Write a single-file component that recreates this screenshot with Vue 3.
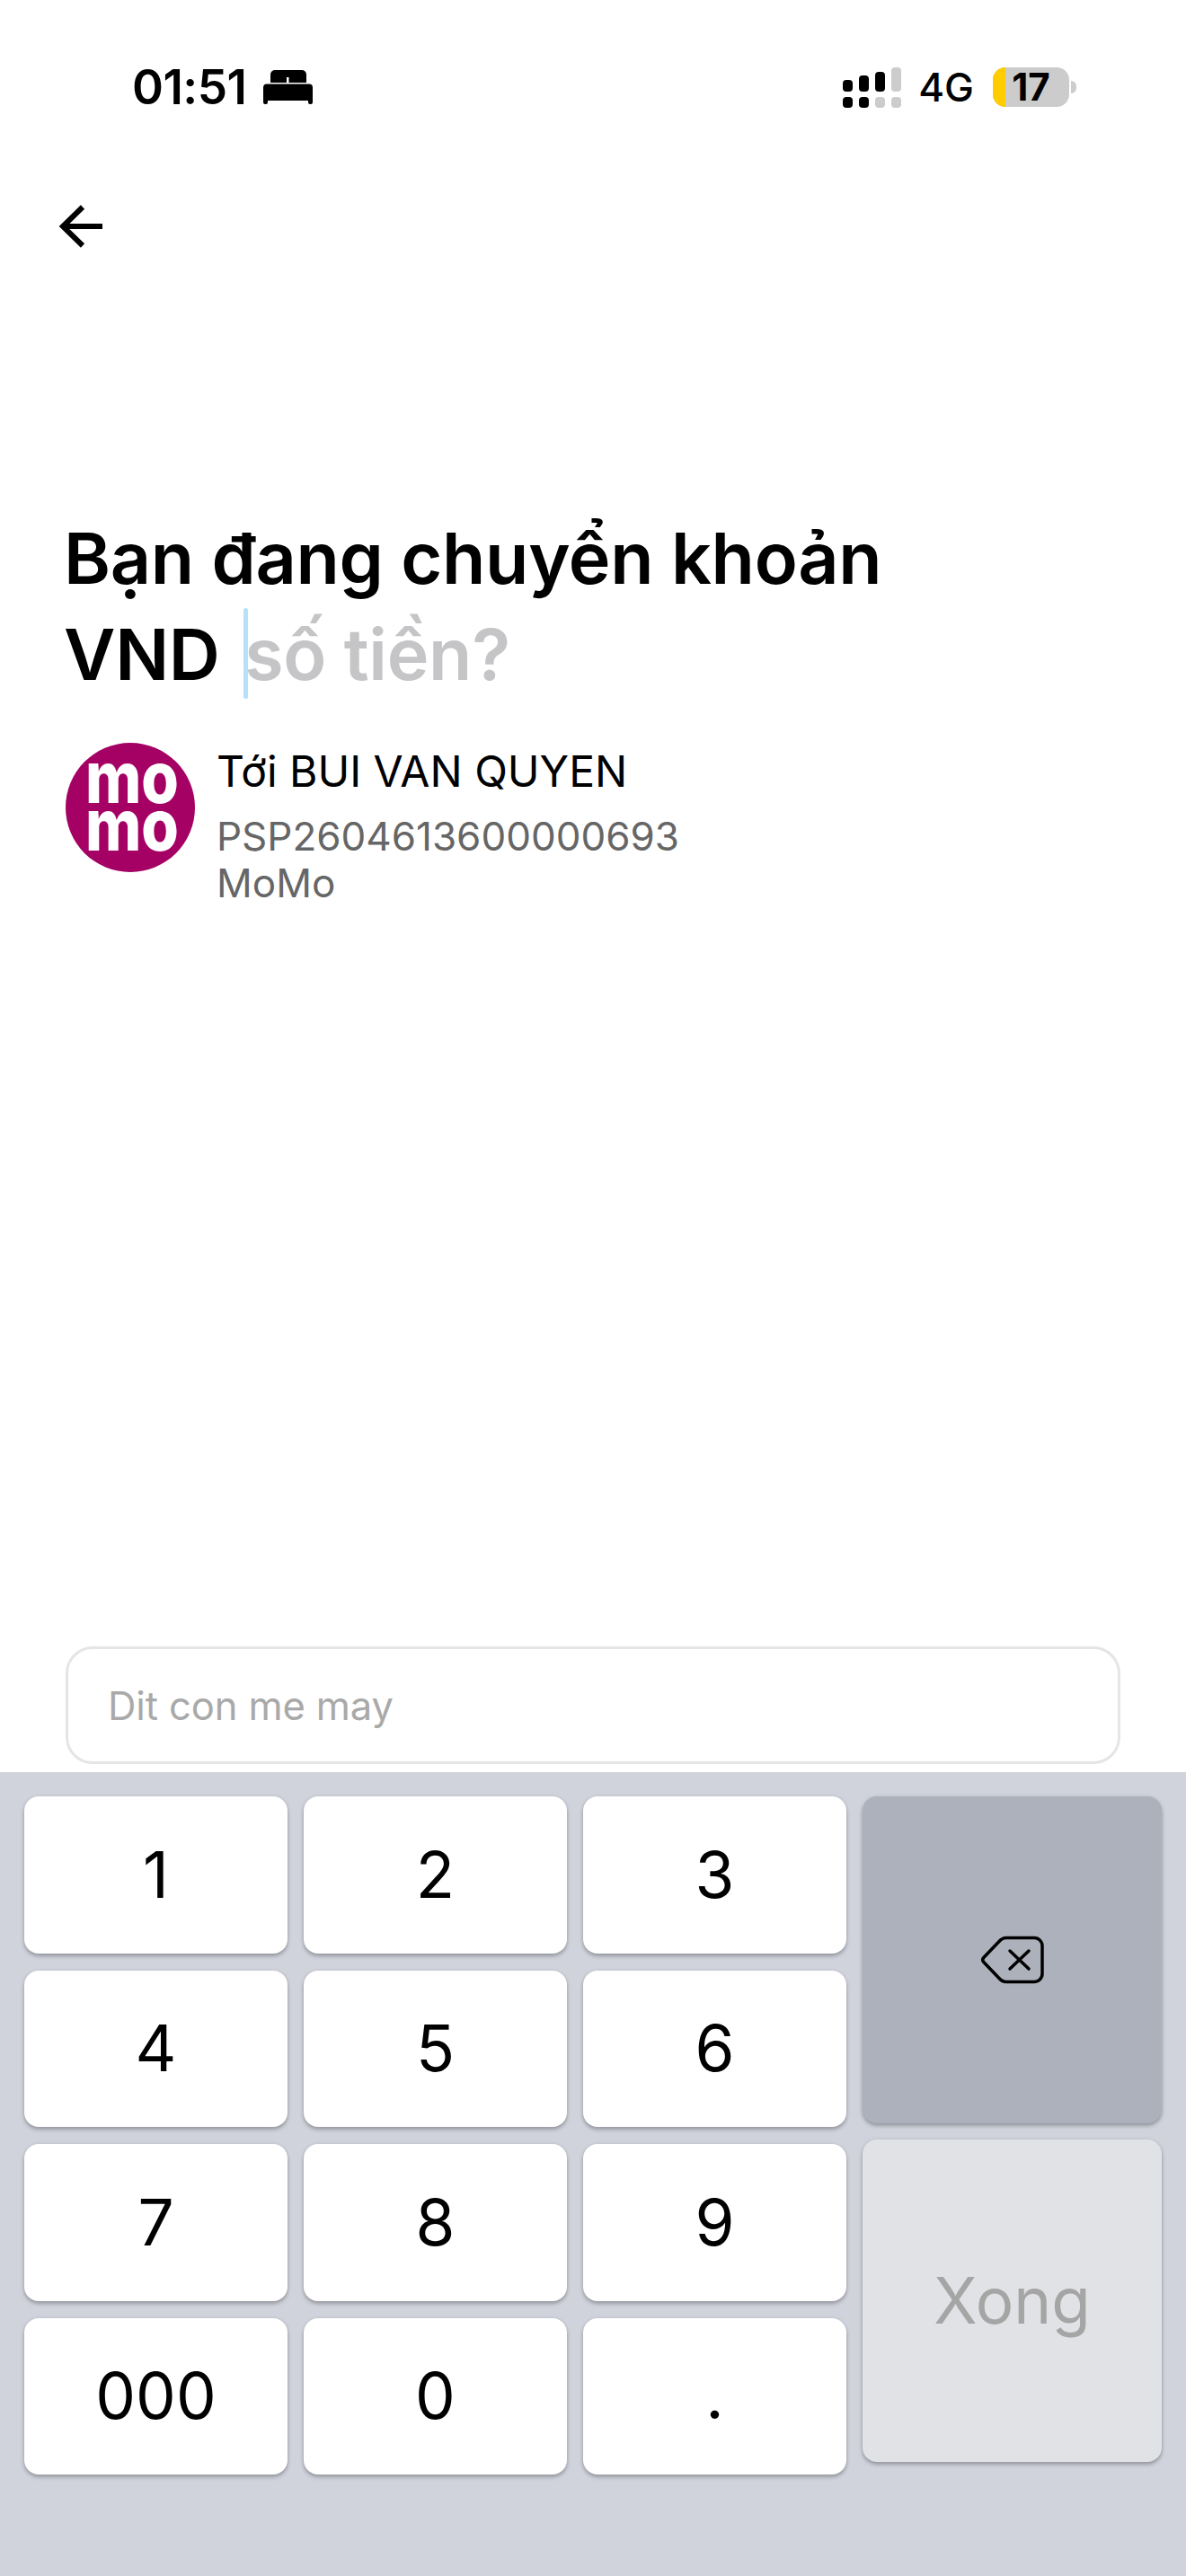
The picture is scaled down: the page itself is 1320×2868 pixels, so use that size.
<template>
  <div class="screen">
    <header class="status">
      <div class="status__left">
        <span class="status__time">01:51</span>
        <svg class="status__bed" width="55" height="38" viewBox="0 0 55 38">
          <rect x="8" y="0" width="40" height="14" rx="5" fill="#000" />
          <rect x="8" y="8" width="40" height="6" fill="#000" />
          <rect x="26" y="8" width="2.5" height="7" fill="#fff" />
          <path d="M4 15.500h47a4 4 0 0 1 4 4V36a2 2 0 0 1-2 2h-1a2 2 0 0 1-2-2v-2H5v2a2 2 0 0 1-2 2H2a2 2 0 0 1-2-2V19.500a4 4 0 0 1 4-4z" fill="#000" />
        </svg>
      </div>
      <div class="status__right">
        <div class="signal">
          <div v-for="(bar, i) in signalBars" :key="i" class="signal__col">
            <span class="signal__top" :class="{ 'signal__off': !bar.topOn }" :style="{ height: bar.height + 'px' }"></span>
            <span class="signal__dot" :class="{ 'signal__off': !bar.dotOn }"></span>
          </div>
        </div>
        <span class="status__net">4G</span>
        <div class="battery">
          <div class="battery__body">
            <span class="battery__level"></span>
            <span class="battery__text">17</span>
          </div>
          <span class="battery__cap"></span>
        </div>
      </div>
    </header>

    <nav class="nav">
      <svg width="52" height="52" viewBox="0 0 52 52" fill="none" stroke="#000" stroke-width="6">
        <path d="M50 26H5" />
        <path d="M28 4.500 6 26l22 21.500" />
      </svg>
    </nav>

    <main class="main">
      <h1 class="title">
        Bạn đang chuyển khoản<br />
        VND <span class="title__amount"><i class="title__caret"></i>số tiền?</span>
      </h1>

      <div class="recipient">
        <svg class="recipient__logo" width="144" height="144" viewBox="0 0 144 144">
          <circle cx="72" cy="72" r="72" fill="#a50064" />
          <text x="22" y="67" class="recipient__logo-text" textLength="104" lengthAdjust="spacingAndGlyphs">mo</text>
          <text x="22" y="120" class="recipient__logo-text" textLength="104" lengthAdjust="spacingAndGlyphs">mo</text>
        </svg>
        <div class="recipient__info">
          <p class="recipient__name">Tới BUI VAN QUYEN</p>
          <p class="recipient__meta">PSP2604613600000693</p>
          <p class="recipient__meta">MoMo</p>
        </div>
      </div>
    </main>

    <div class="note">Dit con me may</div>

    <section class="keyboard">
      <div class="keyboard__digits">
        <div v-for="key in digits" :key="key" class="key">{{ key }}</div>
      </div>
      <div class="keyboard__actions">
        <div class="key key--delete">
          <svg width="72" height="54" viewBox="0 0 72 54" fill="none" stroke="#000" stroke-width="3.500" stroke-linejoin="round">
            <path d="M3.800 24.500 21 6.500Q24.500 2.500 29 2.500H60a9 9 0 0 1 9 9v31a9 9 0 0 1-9 9H29Q24.500 51.500 21 47.500L3.800 29.500Q1.600 27 3.800 24.500z" />
            <path d="M33 17 54 37M54 17 33 37" stroke-linecap="round" />
          </svg>
        </div>
        <div class="key key--done">Xong</div>
      </div>
    </section>
  </div>
</template>

<script setup>
const digits = ["1", "2", "3", "4", "5", "6", "7", "8", "9", "000", "0", "."];

const signalBars = [
  { height: 13, topOn: true, dotOn: true },
  { height: 18, topOn: true, dotOn: true },
  { height: 22, topOn: true, dotOn: false },
  { height: 27, topOn: false, dotOn: false },
];
</script>

<style scoped>
.screen {
  display: flex;
  flex-direction: column;
  height: 2868px;
  background: #fff;
  color: #000;
  font-family: Inter, "Noto Sans", sans-serif;
  overflow: hidden;
}

.status {
  display: flex;
  justify-content: space-between;
  align-items: center;
  height: 194px;
  padding: 0 122px 0 147px;
}

.status__left {
  display: flex;
  align-items: center;
  gap: 18px;
}

.status__time {
  font-size: 53px;
  font-weight: 600;
  line-height: 1;
  letter-spacing: -0.5px;
}

.status__bed {
  display: block;
}

.status__right {
  display: flex;
  align-items: center;
}

.signal {
  display: flex;
  gap: 7px;
  margin-right: 19px;
}

.signal__col {
  display: flex;
  flex-direction: column;
  justify-content: flex-end;
  gap: 6px;
  height: 45px;
}

.signal__top,
.signal__dot {
  display: block;
  width: 11px;
  background: #000;
  border-radius: 4px;
}

.signal__dot {
  height: 12px;
}

.signal__off {
  background: #ccc;
}

.status__net {
  font-size: 44px;
  font-weight: 500;
  line-height: 1;
  margin-right: 21px;
}

.battery {
  display: flex;
  align-items: center;
  gap: 2px;
}

.battery__body {
  display: flex;
  align-items: center;
  justify-content: center;
  width: 85px;
  height: 44px;
  border-radius: 14px;
  background: #ccc;
  position: relative;
}

.battery__level {
  position: absolute;
  left: 0;
  top: 0;
  bottom: 0;
  width: 14px;
  border-radius: 14px 0 0 14px;
  background: #ffcc00;
}

.battery__text {
  font-size: 42px;
  font-weight: 700;
  line-height: 1;
}

.battery__cap {
  width: 6px;
  height: 14px;
  background: #ccc;
  border-radius: 0 6px 6px 0;
}

.nav {
  padding: 32px 0 0 64px;
}

.nav svg {
  display: block;
}

.main {
  flex: 1;
  padding: 290px 73px 0;
}

.title {
  margin: 0 0 0 -2px;
  font-size: 79px;
  font-weight: 600;
  line-height: 107px;
  letter-spacing: -0.3px;
}

.title__amount {
  position: relative;
  margin-left: 8px;
  color: #c5c5c7;
}

.title__caret {
  position: absolute;
  left: -1px;
  top: -3px;
  width: 5px;
  height: 101px;
  border-radius: 3px;
  background: #0a9bf0;
  opacity: 0.3;
}

.recipient {
  display: flex;
  gap: 24px;
  margin-top: 45px;
}

.recipient__logo {
  display: block;
  flex-shrink: 0;
  overflow: visible;
}

.recipient__logo-text {
  fill: #fff;
  font-family: Inter, sans-serif;
  font-size: 80px;
  font-weight: 800;
}

.recipient__info {
  padding-top: 6px;
}

.recipient__info p {
  margin: 0;
}

.recipient__name {
  font-size: 48px;
  line-height: 52px;
  margin-bottom: 20px !important;
}

.recipient__meta {
  font-size: 44px;
  line-height: 52px;
  color: #666;
}

.note {
  display: flex;
  align-items: center;
  height: 131px;
  margin: 0 73px 9px;
  padding: 0 44px;
  box-sizing: border-box;
  border: 3px solid #e5e5e5;
  border-radius: 30px;
  font-size: 43.500px;
  letter-spacing: -0.1px;
  color: #a9a9a9;
}

.keyboard {
  display: flex;
  gap: 18px;
  height: 895px;
  padding: 27px 27px 0;
  box-sizing: border-box;
  background: #d0d3dc;
}

.keyboard__digits {
  display: grid;
  grid-template-columns: repeat(3, 293px);
  grid-auto-rows: 174.5px;
  gap: 19px 18px;
  align-content: start;
}

.keyboard__actions {
  display: flex;
  flex-direction: column;
  gap: 18px;
  width: 333px;
}

.key {
  display: flex;
  align-items: center;
  justify-content: center;
  border-radius: 16px;
  background: #fff;
  box-shadow: 0 3px 4px rgba(0, 0, 0, 0.25), 0 0 4px rgba(0, 0, 0, 0.08);
  font-size: 71px;
  line-height: 1;
}

.key--delete {
  height: 364px;
  background: #adb1bc;
}

.key--delete svg {
  display: block;
}

.key--done {
  height: 359px;
  background: #e1e2e5;
  color: #a5a5a5;
}
</style>
